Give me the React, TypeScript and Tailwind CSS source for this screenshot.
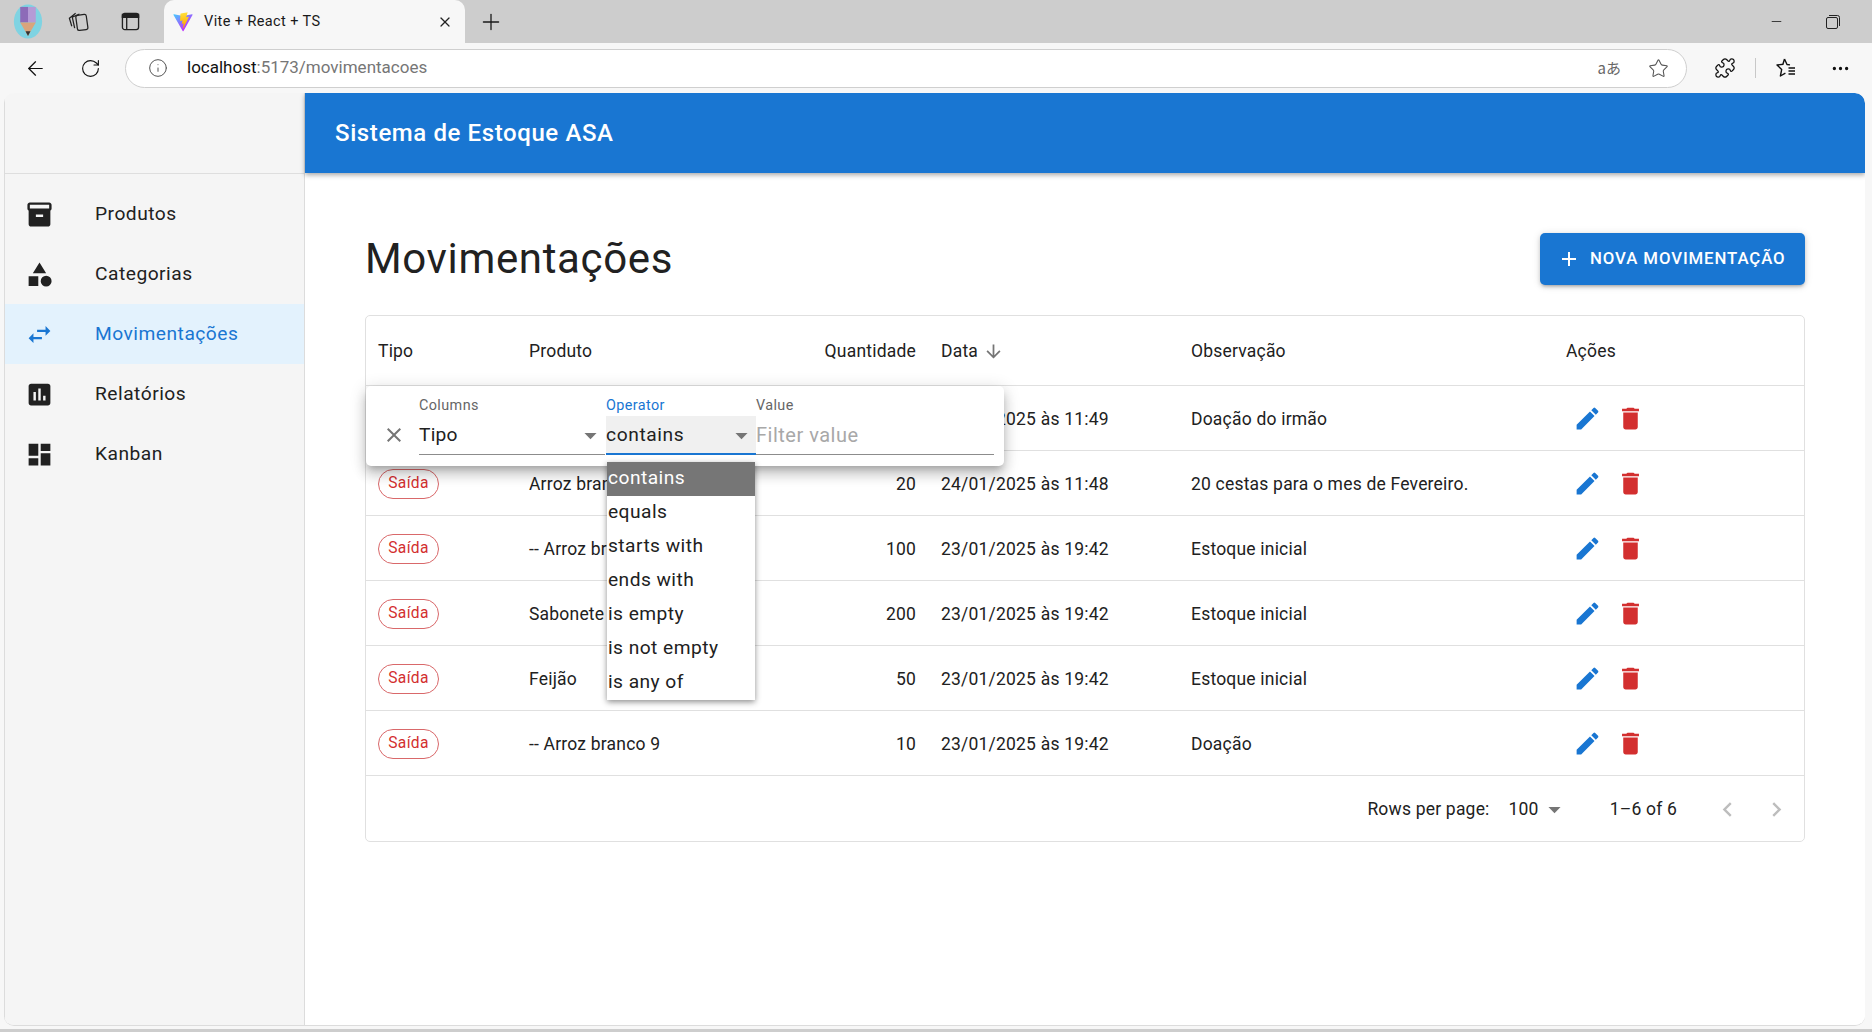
import { ArrowLeft, Info, Minus, MoreHorizontal, Plus, Puzzle, RotateCw, Star, X } from "lucide-react";
import type { ReactNode } from "react";

const P = {
  inventory: "M20 2H4c-1 0-2 .9-2 2v3.01c0 .72.43 1.34 1 1.69V20c0 1.1 1.1 2 2 2h14c.9 0 2-.9 2-2V8.7c.57-.35 1-.97 1-1.69V4c0-1.1-1-2-2-2zm-5 12H9v-2h6v2zm5-7H4V4l16-.02V7z",
  category: "M12 2l-5.5 9h11zM17.5 13a4.5 4.5 0 1 0 0 9 4.5 4.5 0 0 0 0-9zM3 13.5h8v8H3z",
  swap: "M6.99 11L3 15l3.99 4v-3H14v-2H6.99v-3zM21 9l-3.99-4v3H10v2h7.01v3L21 9z",
  assessment: "M19 3H5c-1.1 0-2 .9-2 2v14c0 1.1.9 2 2 2h14c1.1 0 2-.9 2-2V5c0-1.1-.9-2-2-2zM9 17H7v-7h2v7zm4 0h-2V7h2v10zm4 0h-2v-4h2v4z",
  dashboard: "M3 13h8V3H3v10zm0 8h8v-6H3v6zm10 0h8V11h-8v10zm0-18v6h8V3h-8z",
  add: "M19 13h-6v6h-2v-6H5v-2h6V5h2v6h6v2z",
  close: "M19 6.41 17.59 5 12 10.59 6.41 5 5 6.41 10.59 12 5 17.59 6.41 19 12 13.41 17.59 19 19 17.59 13.41 12z",
  down: "M20 12l-1.41-1.41L13 16.17V4h-2v12.17l-5.58-5.59L4 12l8 8 8-8z",
  drop: "M7 10l5 5 5-5z",
  edit: "M3 17.25V21h3.75L17.81 9.94l-3.75-3.75L3 17.25zM20.71 7.04c.39-.39.39-1.02 0-1.41l-2.34-2.34a.9959.9959 0 0 0-1.41 0l-1.83 1.83 3.75 3.75 1.83-1.83z",
  del: "M6 19c0 1.1.9 2 2 2h8c1.1 0 2-.9 2-2V7H6v12zM19 4h-3.5l-1-1h-5l-1 1H5v2h14V4z",
  prev: "M15.41 7.41 14 6l-6 6 6 6 1.41-1.41L10.83 12z",
  next: "M10 6L8.59 7.41 13.17 12l-4.58 4.59L10 18l6-6z",
};

function Mi({ d, className }: { d: string; className?: string }) {
  return (
    <svg viewBox="0 0 24 24" fill="currentColor" className={className}>
      <path d={d} />
    </svg>
  );
}

function ToolSlot({ className, children }: { className: string; children: ReactNode }) {
  return <div className={`${className} flex shrink-0 items-center justify-center`}>{children}</div>;
}

function ViteLogo() {
  return (
    <svg viewBox="0 0 410 404" className="h-[20px] w-[20px] shrink-0">
      <defs>
        <linearGradient id="viteBody" x1="6" y1="33" x2="235" y2="344" gradientUnits="userSpaceOnUse">
          <stop offset="0" stopColor="#41d1ff" />
          <stop offset="1" stopColor="#bd34fe" />
        </linearGradient>
        <linearGradient id="viteBolt" x1="194" y1="8" x2="236" y2="293" gradientUnits="userSpaceOnUse">
          <stop offset="0" stopColor="#ffea83" />
          <stop offset="0.08" stopColor="#ffdd35" />
          <stop offset="1" stopColor="#ffa800" />
        </linearGradient>
      </defs>
      <path
        d="M399.641 59.525 215.643 388.545c-3.799 6.793-13.559 6.833-17.415.073L10.582 59.556C6.38 52.19 12.68 43.266 21.028 44.76l184.195 32.923c1.175.21 2.378.208 3.553-.006l180.343-32.87c8.32-1.517 14.65 7.337 10.522 14.718Z"
        fill="url(#viteBody)"
      />
      <path
        d="M292.965 1.574 156.801 28.255a5 5 0 0 0-4.03 4.611l-8.376 141.464c-.197 3.332 2.863 5.918 6.115 5.168l37.91-8.749c3.547-.818 6.752 2.306 6.023 5.873l-11.263 55.153c-.758 3.712 2.727 6.886 6.352 5.785l23.415-7.114c3.63-1.102 7.118 2.081 6.35 5.796l-17.899 86.633c-1.12 5.419 6.088 8.374 9.094 3.728l2.008-3.103 110.954-221.428c1.858-3.707-1.346-7.935-5.418-7.15l-39.022 7.532c-3.667.707-6.787-2.708-5.752-6.296l25.469-88.291c1.036-3.594-2.095-7.012-5.766-6.293Z"
        fill="url(#viteBolt)"
      />
    </svg>
  );
}

function BrowserChrome() {
  return (
    <>
      <div className="flex h-[43px] items-end bg-[#cdcdcd] text-[#1a1a1a]">
        <div className="flex h-[43px] w-[55px] shrink-0 items-center justify-center pl-[1px]">
          <svg viewBox="0 0 30 36" className="h-[35px] w-[30px]">
            <ellipse cx="15" cy="18" rx="14.5" ry="17.5" fill="#7fd3e2" />
            <path d="M7 3h8v16H7z" fill="#8d6bb8" />
            <path d="M15 3h8v16h-8z" fill="#b59bd6" />
            <path d="M7 19h16l-8 14z" fill="#d9a47c" />
            <path d="M12.5 28h5L15 33z" fill="#333" />
          </svg>
        </div>
        <div className="flex h-[43px] w-[47px] shrink-0 items-center justify-center">
          <svg viewBox="0 0 24 24" fill="none" stroke="#222" strokeWidth="1.3" className="h-[23px] w-[23px]">
            <rect x="10" y="5" width="11" height="16" rx="2" transform="rotate(-8 15 13)" />
            <path d="M8 19 5.5 7.5 13 4.2M5 17 2.5 8.5 9 3.5" />
          </svg>
        </div>
        <div className="flex h-[43px] w-[56px] shrink-0 items-center justify-center">
          <svg viewBox="0 0 20 20" className="h-[19px] w-[19px]" fill="none" stroke="#222" strokeWidth="1.4">
            <rect x="1.5" y="1.5" width="17" height="17" rx="2.5" />
            <path d="M1.5 2.5h17v3h-17z" fill="#222" />
            <path d="M6 5v13" />
          </svg>
        </div>
        <div className="ml-[6px] flex h-[43px] w-[301px] shrink-0 items-center rounded-t-[10px] bg-[#f7f7f7] pl-[9px] pr-[12px]">
          <ViteLogo />
          <span className="ml-[11px] flex-1 text-[14.5px] tracking-[0.4px] text-[#1a1a1a]">Vite + React + TS</span>
          <X size={16} strokeWidth={1.8} className="text-[#222]" />
        </div>
        <div className="flex h-[43px] w-[52px] shrink-0 items-center justify-center">
          <Plus size={26} strokeWidth={1.2} />
        </div>
        <div className="flex-1" />
        <div className="flex h-[43px] w-[57px] shrink-0 items-center justify-center pl-[2px]">
          <Minus size={15} strokeWidth={1.3} />
        </div>
        <div className="flex h-[43px] w-[68px] shrink-0 items-center justify-center pr-[11px]">
          <svg viewBox="0 0 14 14" fill="none" stroke="#222" strokeWidth="1" className="h-[14px] w-[14px]">
            <rect x="0.5" y="2.5" width="11" height="11" rx="1.5" />
            <path d="M3 .5h8.5a2 2 0 0 1 2 2V11" />
          </svg>
        </div>
      </div>
      <div className="flex h-[50px] items-center bg-[#f7f7f7]">
        <ToolSlot className="w-[70px]">
          <ArrowLeft size={23} strokeWidth={1.3} className="text-[#111]" />
        </ToolSlot>
        <ToolSlot className="w-[40px]">
          <RotateCw size={21} strokeWidth={1.3} className="text-[#111]" />
        </ToolSlot>
        <div className="ml-[15px] flex h-[39px] w-[1562px] shrink-0 items-center rounded-full border border-[#cfcfcf] bg-white">
          <Info size={20} strokeWidth={1.2} className="ml-[22px] text-[#555]" />
          <span className="ml-[19px] flex-1 text-[17px]">
            <span className="text-[#111]">localhost</span>
            <span className="text-[#767676]">:5173/movimentacoes</span>
          </span>
          <span className="mr-[6px] font-['Noto_Sans_CJK_JP','Noto_Sans',sans-serif] text-[15px] text-[#666]">aあ</span>
          <Star size={21} strokeWidth={1.2} className="ml-[21px] mr-[17px] text-[#555]" />
        </div>
        <ToolSlot className="ml-[8px] w-[60px]">
          <Puzzle size={22} strokeWidth={1.4} className="text-[#111]" />
        </ToolSlot>
        <div className="h-[20px] w-px bg-[#c8c8c8]" />
        <ToolSlot className="w-[60px]">
          <svg viewBox="0 0 24 24" fill="none" stroke="#111" strokeWidth="1.4" strokeLinejoin="round" className="h-[24px] w-[24px]">
            <path d="M10.5 3 13 8.5l3 .4M9.5 8.2 3 9l4.7 4.4L6.4 20l5-2.8M10.5 3 8.9 8.2M14.5 12H21M14.5 15H21M14.5 18H21" />
          </svg>
        </ToolSlot>
        <ToolSlot className="w-[48px]">
          <MoreHorizontal size={21} strokeWidth={1.8} className="text-[#111]" />
        </ToolSlot>
      </div>
    </>
  );
}

const NAV = [
  { label: "Produtos", icon: P.inventory },
  { label: "Categorias", icon: P.category },
  { label: "Movimentações", icon: P.swap, active: true },
  { label: "Relatórios", icon: P.assessment },
  { label: "Kanban", icon: P.dashboard },
];

function Sidebar() {
  return (
    <aside className="w-[301px] shrink-0 border-x border-[#dcdcdc] bg-[#f5f5f5]">
      <div className="h-[81px] border-b border-[#dedede]" />
      <ul className="pt-[10px]">
        {NAV.map((item) => (
          <li
            key={item.label}
            className={
              item.active
                ? "flex h-[60px] items-center bg-[#e3f2fd] pl-[20px] text-[#1976d2]"
                : "flex h-[60px] items-center pl-[20px] text-[#212121]"
            }
          >
            <Mi d={item.icon} className="h-[29px] w-[29px]" />
            <span className="ml-[41px] pt-[1px] text-[19.2px] tracking-[0.5px]">{item.label}</span>
          </li>
        ))}
      </ul>
    </aside>
  );
}

const COLS = "grid grid-cols-[151px_251px_161px_250px_375px_1fr] items-center";

const ROWS = [
  { produto: "Arroz branco 9", qtd: "30", data: "24/01/2025 às 11:49", obs: "Doação do irmão" },
  { produto: "Arroz branco 9", qtd: "20", data: "24/01/2025 às 11:48", obs: "20 cestas para o mes de Fevereiro." },
  { produto: "-- Arroz branco 9", qtd: "100", data: "23/01/2025 às 19:42", obs: "Estoque inicial" },
  { produto: "Sabonete", qtd: "200", data: "23/01/2025 às 19:42", obs: "Estoque inicial" },
  { produto: "Feijão", qtd: "50", data: "23/01/2025 às 19:42", obs: "Estoque inicial" },
  { produto: "-- Arroz branco 9", qtd: "10", data: "23/01/2025 às 19:42", obs: "Doação" },
];

const OPERATORS = ["contains", "equals", "starts with", "ends with", "is empty", "is not empty", "is any of"];

function FilterPanel() {
  return (
    <div className="absolute left-0 top-[70px] z-10 flex h-[80px] w-[638px] rounded-[5px] bg-white pr-[10px] shadow-[0_5px_6px_-3px_rgba(0,0,0,0.2),0_9px_12px_1px_rgba(0,0,0,0.14),0_3px_16px_2px_rgba(0,0,0,0.12)]">
      <div className="flex w-[53px] items-start justify-center pl-[2px] pt-[37px]">
        <Mi d={P.close} className="h-[24px] w-[24px] text-[#757575]" />
      </div>
      <div className="w-[187px] pt-[11px]">
        <div className="h-[18px] text-[14.4px] leading-[18px] tracking-[0.4px] text-[#666]">Columns</div>
        <div className="mr-[1px] mt-[1px] flex h-[39px] items-center justify-between border-b border-[#8c8c8c] text-[19.2px] tracking-[0.2px] text-[#212121]">
          Tipo
          <Mi d={P.drop} className="h-[29px] w-[29px] text-[#757575]" />
        </div>
      </div>
      <div className="relative w-[150px] pt-[11px]">
        <div className="h-[18px] text-[14.4px] leading-[18px] tracking-[0.4px] text-[#1976d2]">Operator</div>
        <div className="mt-[1px] flex h-[39px] items-center justify-between border-b-2 border-[#1976d2] bg-[#f0f0f0] pt-[2px] text-[19.2px] tracking-[0.6px] text-[#212121]">
          contains
          <Mi d={P.drop} className="h-[29px] w-[29px] text-[#757575]" />
        </div>
        <ul className="absolute left-[1px] top-[76px] w-[148px] bg-white shadow-[0_2px_6px_rgba(0,0,0,0.45)]">
          {OPERATORS.map((op, i) => (
            <li
              key={op}
              className={
                i === 0
                  ? "flex h-[34px] items-center bg-[#767676] pb-[1px] pl-[1px] text-[19.2px] tracking-[0.45px] text-white"
                  : "flex h-[34px] items-center pb-[1px] pl-[1px] text-[19.2px] tracking-[0.45px] text-[#212121]"
              }
            >
              {op}
            </li>
          ))}
        </ul>
      </div>
      <div className="flex-1 pt-[11px]">
        <div className="h-[18px] text-[14.4px] leading-[18px] tracking-[0.4px] text-[#666]">Value</div>
        <div className="mt-[1px] flex h-[39px] items-center border-b border-[#8c8c8c] text-[20px] tracking-[0.5px] text-[#a8a8a8]">Filter value</div>
      </div>
    </div>
  );
}

function MovTable() {
  return (
    <div className="relative mt-[30px] h-[527px] rounded-[5px] border border-[#e0e0e0] text-[17.5px] tracking-[0.2px] text-[#212121]">
      <div className={`${COLS} h-[70px] border-b border-[#e0e0e0] pt-[1px] font-normal`}>
        <div className="px-[12px]">Tipo</div>
        <div className="px-[12px]">Produto</div>
        <div className="pl-[12px] pr-[13px] text-right">Quantidade</div>
        <div className="flex items-center px-[12px]">
          Data
          <Mi d={P.down} className="ml-[5px] h-[21px] w-[21px] text-[#757575]" />
        </div>
        <div className="px-[12px]">Observação</div>
        <div className="px-[12px]">Ações</div>
      </div>
      {ROWS.map((r, i) => (
        <div key={i} className={`${COLS} h-[65px] border-b border-[#e0e0e0] pt-[2px]`}>
          <div className="px-[12px]">
            <span className="flex h-[30px] w-[61px] items-center justify-center rounded-full border border-[#d9686a] text-[15.6px] tracking-[0.3px] text-[#d32f2f]">Saída</span>
          </div>
          <div className="whitespace-nowrap px-[12px]">{r.produto}</div>
          <div className="pl-[12px] pr-[13px] text-right">{r.qtd}</div>
          <div className="px-[12px]">{r.data}</div>
          <div className="px-[12px]">{r.obs}</div>
          <div className="mb-[2px] flex px-[12px]">
            <span className="p-[7px]">
              <Mi d={P.edit} className="h-[29px] w-[29px] text-[#1976d2]" />
            </span>
            <span className="p-[7px]">
              <Mi d={P.del} className="h-[29px] w-[29px] text-[#d32f2f]" />
            </span>
          </div>
        </div>
      ))}
      <div className="flex h-[65px] items-center justify-end pt-[2px]">
        <span>Rows per page:</span>
        <span className="ml-[19px]">100</span>
        <Mi d={P.drop} className="ml-[1px] h-[29px] w-[29px] text-[#757575]" />
        <span className="ml-[41px]">1–6 of 6</span>
        <Mi d={P.prev} className="ml-[36px] h-[29px] w-[29px] text-[#bdbdbd]" />
        <Mi d={P.next} className="ml-[20px] mr-[13px] h-[29px] w-[29px] text-[#bdbdbd]" />
      </div>
      <FilterPanel />
    </div>
  );
}

function Main() {
  return (
    <div className="flex min-w-0 flex-1 flex-col bg-white">
      <header className="z-10 flex h-[80px] shrink-0 items-center rounded-tr-[10px] bg-[#1976d2] pl-[30px] text-[24px] font-medium tracking-[0.6px] text-white shadow-[0_2px_5px_rgba(0,0,0,0.35)]">
        Sistema de Estoque ASA
      </header>
      <main className="px-[60px] pt-[60px]">
        <div className="flex h-[52px] items-center justify-between">
          <h1 className="text-[42px] leading-[52px] tracking-[0.65px] text-[#212121]">Movimentações</h1>
          <button className="flex h-[52px] w-[265px] items-center rounded-[5px] bg-[#1976d2] pl-[17px] text-[16.8px] font-medium tracking-[0.9px] text-white shadow-[0_3px_3px_-2px_rgba(0,0,0,0.2),0_2px_4px_0_rgba(0,0,0,0.14),0_1px_8px_0_rgba(0,0,0,0.12)]">
            <Mi d={P.add} className="mr-[9px] h-[24px] w-[24px]" />
            NOVA MOVIMENTAÇÃO
          </button>
        </div>
        <MovTable />
      </main>
    </div>
  );
}

export default function App() {
  return (
    <div className="flex h-[1032px] w-[1872px] flex-col overflow-hidden bg-[#f7f7f7] font-['Roboto',sans-serif]">
      <BrowserChrome />
      <div className="flex h-[933px] shrink-0 pl-[4px] pr-[7px]">
        <div className="flex flex-1 overflow-hidden rounded-[10px] border-b border-[#dcdcdc]">
          <Sidebar />
          <Main />
        </div>
      </div>
      <div className="mt-[3px] flex-1 bg-[#cdcdcd]" />
    </div>
  );
}
